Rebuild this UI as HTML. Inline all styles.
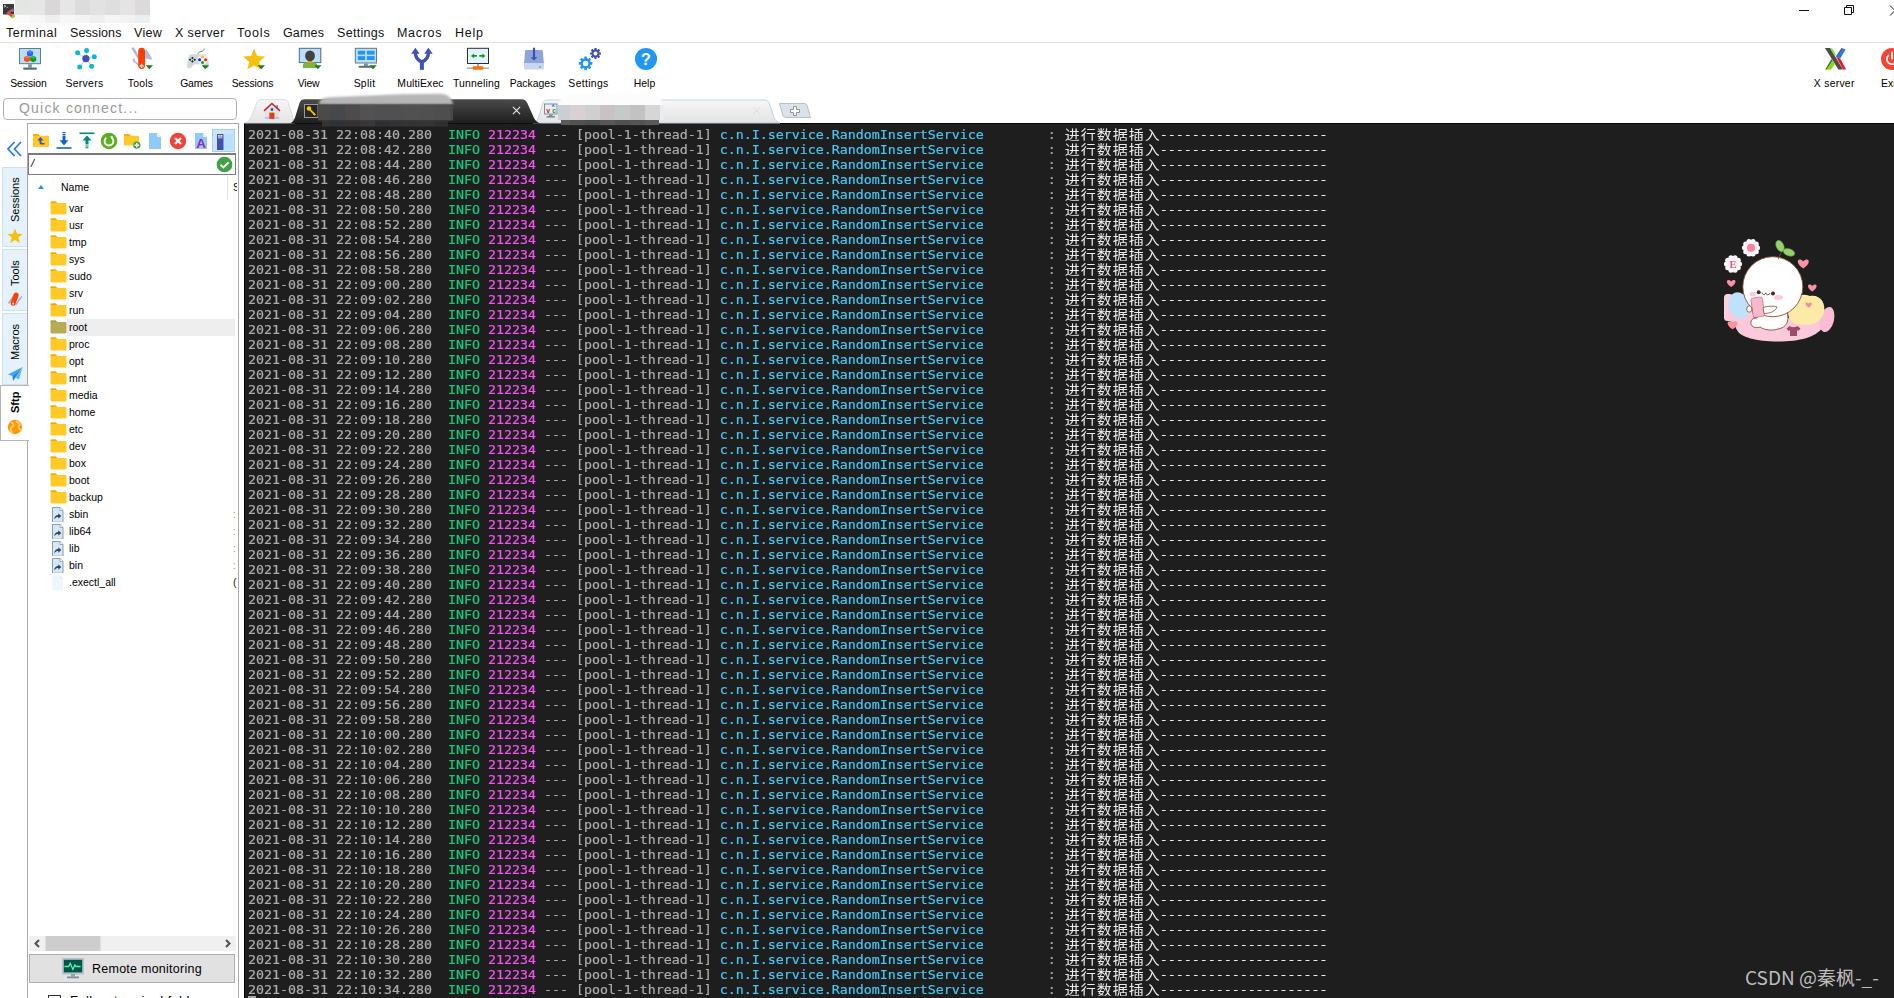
<!DOCTYPE html>
<html lang="en"><head><meta charset="utf-8"><title>MobaXterm</title>
<style>
*{box-sizing:border-box;margin:0;padding:0}
html,body{width:1894px;height:998px;overflow:hidden;background:#fff}
body{position:relative;font-family:"Liberation Sans","Noto Sans CJK SC",sans-serif;color:#000}
.abs{position:absolute}
/* title bar */
#appicon{position:absolute;left:2px;top:3px;width:14px;height:16px}
#blurtitle{position:absolute;left:15px;top:0;width:136px;height:26px}
.wc{position:absolute;top:0;height:22px}
/* menu */
#menu span{position:absolute;top:25px;height:17px;line-height:17px;font-size:12.5px;white-space:nowrap;color:#111}
#menuline{position:absolute;left:0;top:42px;width:1894px;height:1px;background:#e3e3e3}
/* toolbar */
.tb{position:absolute;top:44px;width:56px;height:50px;text-align:center}
.tb svg{position:absolute;left:16px;top:3px;width:24px;height:24px}
.tb b{position:absolute;left:-11.5px;right:-8.5px;top:33px;font-weight:normal;font-size:10.4px;line-height:13px;white-space:nowrap;color:#000}
/* quick connect */
#qc{position:absolute;left:3px;top:98px;width:234px;height:22px;border:1px solid #b4b4b4;border-radius:4px;background:#fff;font-size:14px;letter-spacing:1.2px;color:#9a9a9a;line-height:19px;padding-left:15px;white-space:nowrap}
/* terminal */
#tabs{z-index:5}
#term{position:absolute;left:244px;top:123px;width:1650px;height:875px;background:#1e1e1e;box-shadow:inset 1px 1px 0 #000;overflow:hidden;font-family:"DejaVu Sans Mono","Liberation Mono","Noto Sans CJK SC",monospace;font-size:13.29px;color:#b4b4b4}
#term .ln{position:relative;height:15px;line-height:15px;white-space:pre;left:4px;top:4px;transform:scaleY(.92);transform-origin:0 11.5px;-webkit-text-stroke:.22px}
.g{color:#adadad}.i{color:#1dc679}.m{color:#f850f4}.c{color:#48c6f2}.w{color:#ededed}
.z{-webkit-text-stroke:0;position:relative;top:-1px;margin-left:1px;margin-right:-1px;color:#ededed;font-family:"Noto Sans CJK SC",sans-serif;font-size:15px;letter-spacing:1px;display:inline-block;width:96px;height:15px;line-height:15px;vertical-align:top;overflow:hidden}
#cursor{position:absolute;left:4px;top:873px;width:8px;height:2px;background:#aaa}
#wm{position:absolute;left:1501px;top:839.600px;font-family:"Noto Sans CJK SC","Liberation Sans",sans-serif;font-size:19px;line-height:28px;color:#bdbdbd;white-space:nowrap}
/* vertical side tabs */
#vside{position:absolute;left:0;top:0;width:28px;height:998px}
.vt{position:absolute;left:2px;width:25px;background:#e5f1fb;border:1px solid #cfe0f3;border-right:none}
.vt span{position:absolute;left:5px;width:14px;height:14px;line-height:14px;font-size:11px;white-space:nowrap;transform-origin:0 0;transform:rotate(-90deg);color:#000}
.vt svg{position:absolute;left:4px;width:16px;height:16px}
.vt.act{left:0;width:29px;background:#fff;border:1px solid #b5b5b5;border-right:none;z-index:3}
.vt.act span{left:7px}.vt.act svg{left:6px}
/* sftp panel */
#sftp{position:absolute;left:27px;top:123px;width:212px;height:880px;background:#fff;border:1px solid #a9a9a9}
#sftp>svg.abs,#sftp>div.abs{margin-left:0}
#pathbox{position:absolute;left:0px;top:29px;width:208px;height:22px;border:1px solid #7a7a7a;border-top-width:2px;background:#fff}
#pathbox span{position:absolute;left:2px;top:1px;font-size:11px;font-style:italic;line-height:14px}
#pathbox svg{position:absolute;right:2px;top:1px;width:17px;height:17px}
#fhead{position:absolute;left:0;top:52px;width:210px;height:23px;font-size:10.500px}
#fhead i{position:absolute;left:10px;top:9px;width:0;height:0;border-left:3.500px solid transparent;border-right:3.500px solid transparent;border-bottom:4px solid #2a8fe8}
#fhead span{position:absolute;left:33px;top:5px;line-height:13px}
#fhead em{position:absolute;left:199px;top:0;width:1px;height:23px;background:#e0e0e0}
#fhead u{position:absolute;left:205px;top:5px;line-height:13px;text-decoration:none;width:4px;overflow:hidden}
.fr{position:absolute;left:22px;width:187px;height:17px;font-size:10.500px;line-height:17px;white-space:nowrap}
.fr svg{position:absolute;left:0;top:1px;width:17px;height:14px}
.fr span{position:absolute;left:17px;top:0;height:17px;padding-left:2px;right:2px}
.fr.sel span{background:#eeeeee}
.fr q{position:absolute;left:183px;top:0;width:4px;overflow:hidden;color:#e08020;quotes:none}
.fr q:before,.fr q:after{content:none}
#hsb{position:absolute;left:1px;top:812px;width:207px;height:15px;background:#f0f0f0}
#hsb svg{position:absolute;left:0;top:0;width:207px;height:15px}
#rmon{position:absolute;left:1px;top:830px;width:206px;height:29px;background:#e1e1e1;border:1px solid #adadad}
#rmon svg{position:absolute;left:32px;top:3px;width:22px;height:21px}
#rmon span{position:absolute;left:62px;top:7px;font-size:12.500px;line-height:15px;white-space:nowrap;letter-spacing:.25px}
#follow{position:absolute;left:0;top:871px;width:210px;height:10px}
#follow i{position:absolute;left:20px;top:0;width:13px;height:13px;border:1px solid #333;background:#fff}
#follow span{position:absolute;left:42px;top:-2.5px;font-size:13px;line-height:15px;white-space:nowrap;letter-spacing:.4px}
#split{position:absolute;left:239px;top:123px;width:5px;height:875px;background:#f0f0f0}

</style></head>
<body>
<svg id="appicon" viewBox="0 0 14 16"><rect x="1" y="1" width="11" height="10.5" fill="#3a3a3a"/><path d="M2 2.2l2 1-2 1" stroke="#eee" stroke-width=".7" fill="none"/><path d="M4.6 4.4h1.4" stroke="#ddd" stroke-width=".6"/><path d="M10.800 5.200L4.200 9.800 10 15l1.800-2L8 9.800 11.800 7z" fill="#e84a4a"/><path d="M12 5.800L9.600 8l1.200 1 1.900-1.800z" fill="#4a90e8"/><path d="M12.300 10.600l.8 3-2.500 1.800-1.300-1.400z" fill="#9ad21a"/></svg>
<svg id="blurtitle" viewBox="0 0 136 26"><rect x="0" y="0" width="15" height="15" fill="#e4e6e3"/><rect x="0" y="15" width="15" height="8" fill="#fafafa"/><rect x="15" y="0" width="15" height="15" fill="#e6e6e6"/><rect x="15" y="15" width="15" height="8" fill="#f6f6f6"/><rect x="30" y="0" width="15" height="15" fill="#d9d7d8"/><rect x="30" y="15" width="15" height="8" fill="#efefef"/><rect x="45" y="0" width="15" height="15" fill="#e6e6e6"/><rect x="45" y="15" width="15" height="8" fill="#f7f7f7"/><rect x="60" y="0" width="15" height="15" fill="#dcdcdc"/><rect x="60" y="15" width="15" height="8" fill="#f4f4f4"/><rect x="75" y="0" width="15" height="15" fill="#e2e2e2"/><rect x="75" y="15" width="15" height="8" fill="#efefef"/><rect x="90" y="0" width="15" height="15" fill="#dedede"/><rect x="90" y="15" width="15" height="8" fill="#f5f5f5"/><rect x="105" y="0" width="15" height="15" fill="#e4e4e4"/><rect x="105" y="15" width="15" height="8" fill="#f2f2f2"/><rect x="120" y="0" width="15" height="15" fill="#dcdadb"/><rect x="120" y="15" width="15" height="8" fill="#eceef2"/><rect x="15" y="23" width="45" height="2" fill="#fafafa"/></svg>
<svg class="abs" style="left:1796px;top:0;width:98px;height:22px" viewBox="0 0 98 22"><path d="M3 10.5h10" stroke="#111" stroke-width="1"/><path d="M48.5 7.5h7v7h-7z M50.5 7.5v-2h7v7h-2" stroke="#111" stroke-width="1" fill="none"/><path d="M94 5.500l10 10m0-10l-10 10" stroke="#111" stroke-width="1"/></svg>
<div id="menu"><span style="left:6px;letter-spacing:0.5px">Terminal</span><span style="left:70px;letter-spacing:0.1px">Sessions</span><span style="left:134px;letter-spacing:0.3px">View</span><span style="left:175px;letter-spacing:0.4px">X server</span><span style="left:237px;letter-spacing:0.9px">Tools</span><span style="left:283px;letter-spacing:0.15px">Games</span><span style="left:337px;letter-spacing:0.3px">Settings</span><span style="left:397px;letter-spacing:0.7px">Macros</span><span style="left:455px;letter-spacing:0.75px">Help</span></div>
<div id="menuline"></div>
<div class="tb" style="left:2px"><svg viewBox="0 0 24 24"><rect x="1" y="1" width="22" height="16.2" fill="#607d8b"/><rect x="2" y="2" width="20" height="14.2" fill="#bbdefb"/><rect x="10.2" y="17.2" width="3.6" height="3.4" fill="#78909c"/><rect x="5.2" y="20.5" width="13.6" height="2.2" rx=".6" fill="#546e7a"/><path d="M12 3.2l3 1.5v3.6l-3 1.5-3-1.5V4.700z" fill="#2962ff"/><path d="M12 3.200l3 1.500-3 1.500-3-1.500z" fill="#448aff"/><path d="M9 8.700l3 1.500v3.600l-3 1.500-3-1.500v-3.600z" fill="#f4511e"/><path d="M9 8.700l3 1.500-3 1.500-3-1.500z" fill="#ff7043"/><path d="M15.200 8.700l3 1.500v3.600l-3 1.500-3-1.500v-3.600z" fill="#0a9a1a"/><path d="M15.200 8.700l3 1.500-3 1.500-3-1.500z" fill="#33c043"/></svg><b style="letter-spacing:-0.04px">Session</b></div>
<div class="tb" style="left:58px"><svg viewBox="0 0 24 24"><g stroke="#cfd8dc" stroke-width="1.3"><path d="M11.900 11.600L3.600 5.800M11.900 11.600L12.600 3.500M11.900 11.600L20.300 9.800M11.900 11.600L17.600 19.200M11.900 11.600L5.700 20.100"/></g><circle cx="11.900" cy="11.600" r="3.600" fill="#3f51b5"/><g fill="#00bcd4"><circle cx="3.600" cy="5.800" r="2.500"/><circle cx="12.600" cy="3.500" r="2.500"/><circle cx="20.300" cy="9.800" r="2.500"/><circle cx="17.600" cy="19.200" r="2.500"/><circle cx="5.700" cy="20.100" r="2.500"/></g></svg><b style="letter-spacing:0.3px">Servers</b></div>
<div class="tb" style="left:114px"><svg viewBox="0 0 24 24"><path d="M1.300 1l2.500-.4 5 8.400v4.400z" fill="#9fa8da" opacity=".85"/><path d="M14.800 3.200l1.900-.6 6 10.200-7.900-1.600z" fill="#9fa8da" opacity=".8"/><path d="M3 11c-1 2 0 4.500 2.200 5l3.200 3 1-1.200-3-2.800c-1.400-.3-2-1.700-1.700-3z" fill="#9fa8da" opacity=".85"/><rect x="8.200" y=".8" width="6.800" height="21.200" rx="3.400" fill="#ff3d00"/><circle cx="11.600" cy="4.600" r=".7" fill="#d23000"/><path d="M11.600 16.800v4M9.600 18.800h4" stroke="#fff" stroke-width="1.300"/><path d="M15.6 18.3h7.4l-3.7 4z" fill="#1b7f1b"/></svg><b style="letter-spacing:0.28px">Tools</b></div>
<div class="tb" style="left:170px"><svg viewBox="0 0 24 24"><path d="M12 7.200c.2-1.800 1.400-2.200 3-2.600 1.400-.4 3.200-1 3.400-3" stroke="#607d8b" stroke-width=".9" fill="none"/><path d="M5.500 7.200h13c2.300 0 3.300 2.800 3.800 6 .5 3.200 1 6.500-.2 7.800-1.400 1.400-3.300-.3-5-2.600-.8-1-1.600-1.200-2.500-1.200h-5.200c-.9 0-1.700.2-2.500 1.200-1.700 2.300-3.600 4-5 2.600-1.200-1.300-.7-4.600-.2-7.800.5-3.200 1.500-6 3.800-6z" fill="#cfd8dc"/><circle cx="16.500" cy="12.700" r="5" fill="#eef2f4"/><path d="M6.400 9.700l1.300 1.300-1.300 1.300-1.300-1.300zM6.400 13.100l1.300 1.300-1.300 1.300-1.300-1.300zM4.100 11.400l1.300 1.300-1.300 1.300-1.300-1.300zM8.700 11.400l1.300 1.300-1.300 1.300-1.300-1.300z" fill="#222"/><circle cx="16.500" cy="9.800" r="1.500" fill="#f4c20d"/><circle cx="13.600" cy="12.700" r="1.500" fill="#1a1aff"/><circle cx="19.500" cy="12.700" r="1.500" fill="#ff1010"/><circle cx="16.500" cy="15.600" r="1.500" fill="#10a010"/><path d="M15.6 18.3h7.4l-3.7 4z" fill="#1b7f1b"/></svg><b style="letter-spacing:-0.15px">Games</b></div>
<div class="tb" style="left:226px"><svg viewBox="0 0 24 24"><polygon points="12.10,1.60 15.16,8.99 23.13,9.62 17.05,14.81 18.92,22.58 12.10,18.40 5.28,22.58 7.15,14.81 1.07,9.62 9.04,8.99" fill="#f4c20d"/><path d="M15.6 18.3h7.4l-3.7 4z" fill="#1b7f1b"/></svg><b style="letter-spacing:-0.08px">Sessions</b></div>
<div class="tb" style="left:282px"><svg viewBox="0 0 24 24"><rect x=".8" y=".8" width="22.500" height="15.300" fill="#546e7a"/><rect x="1.800" y="1.800" width="20.500" height="13.300" fill="#bbdefb"/><path d="M4.900 21v-2.600c0-2 2-3 4.600-3.300h5c2.600.3 4.700 1.300 4.700 3.300V21z" fill="#7cb342"/><path d="M9.800 13.500h4.400v1.600c0 1.400-4.400 1.400-4.400 0z" fill="#ff9800"/><ellipse cx="12" cy="8.900" rx="4.900" ry="5.400" fill="#424242"/><path d="M16.100 18.300h7.400l-3.700 4z" fill="#1b7f1b"/></svg><b style="letter-spacing:-0.15px">View</b></div>
<div class="tb" style="left:338px"><svg viewBox="0 0 24 24"><rect x=".8" y=".8" width="22.200" height="15.700" fill="#607d8b"/><rect x="1.800" y="1.800" width="20.200" height="13.700" fill="#bbdefb"/><g fill="#2196f3"><rect x="3.800" y="3.800" width="7.300" height="3.800"/><rect x="12.900" y="3.800" width="7.700" height="3.800"/><rect x="3.800" y="9.100" width="7.300" height="3.900"/><rect x="12.900" y="9.100" width="7.700" height="3.900"/></g><rect x="10" y="16.500" width="3.800" height="2.400" fill="#78909c"/><rect x="4.800" y="18.800" width="14" height="1.900" rx=".5" fill="#546e7a"/><path d="M15.200 18.300h7.600l-3.800 4z" fill="#1b7f1b"/></svg><b style="letter-spacing:0.3px">Split</b></div>
<div class="tb" style="left:394px"><svg viewBox="0 0 24 24"><path d="M11.900 22.800v-8.500" stroke="#3f51b5" stroke-width="4" fill="none"/><path d="M5.400 5.500c0 5 2.500 8 6.500 9.300M18.400 5.500c0 5-2.500 8-6.500 9.300" stroke="#3f51b5" stroke-width="3.400" fill="none"/><path d="M5.400.8l4.200 6h-8.400zM18.400.8l4.300 6h-8.500z" fill="#3f51b5"/></svg><b style="letter-spacing:0.14px">MultiExec</b></div>
<div class="tb" style="left:450px"><svg viewBox="0 0 24 24"><rect x="1" y=".8" width="22" height="16.200" fill="#2f2f2f"/><rect x="2" y="1.800" width="20" height="14.200" fill="#e3f2fd"/><path d="M4.900 8.900l3-2.300v1.500h3v1.600h-3v1.500z" fill="#0a9a0a"/><path d="M19.400 8.900l-3-2.300v1.500h-3.100v1.600h3.100v1.500z" fill="#0a9a0a"/><rect x="11.100" y="17" width="1.800" height="3" fill="#90a4ae"/><rect x="1" y="20.500" width="22" height="1.300" fill="#90a4ae"/><rect x="6.800" y="19.200" width="10.400" height="3.600" rx=".9" fill="#ff6d00"/></svg><b style="letter-spacing:0.22px">Tunneling</b></div>
<div class="tb" style="left:506px"><svg viewBox="0 0 24 24"><path d="M4.200 3h15.500c.6 0 1 .3 1.100.9l1.100 12.600H2l1.100-12.600c.1-.6.500-.9 1.100-.9z" fill="#8fa5d8"/><path d="M2 16.500h19.900v4.700c0 .7-.5 1.200-1.200 1.200H3.200c-.7 0-1.200-.5-1.200-1.200z" fill="#c9d6f3"/><circle cx="18" cy="20" r=".9" fill="#5ed000"/><path d="M10.900.8h2.200v9.400h2.400L12 13.600 8.500 10.200h2.400z" fill="#3f51b5"/></svg><b style="letter-spacing:0.01px">Packages</b></div>
<div class="tb" style="left:562px"><svg viewBox="0 0 24 24"><g fill="#2196f3"><circle cx="7.6" cy="16.4" r="5.1"/><rect x="6.25" y="9.60" width="2.7" height="6.8" rx=".4" transform="rotate(0.0 7.6 16.4)"/><rect x="6.25" y="9.60" width="2.7" height="6.8" rx=".4" transform="rotate(45.0 7.6 16.4)"/><rect x="6.25" y="9.60" width="2.7" height="6.8" rx=".4" transform="rotate(90.0 7.6 16.4)"/><rect x="6.25" y="9.60" width="2.7" height="6.8" rx=".4" transform="rotate(135.0 7.6 16.4)"/><rect x="6.25" y="9.60" width="2.7" height="6.8" rx=".4" transform="rotate(180.0 7.6 16.4)"/><rect x="6.25" y="9.60" width="2.7" height="6.8" rx=".4" transform="rotate(225.0 7.6 16.4)"/><rect x="6.25" y="9.60" width="2.7" height="6.8" rx=".4" transform="rotate(270.0 7.6 16.4)"/><rect x="6.25" y="9.60" width="2.7" height="6.8" rx=".4" transform="rotate(315.0 7.6 16.4)"/></g><circle cx="7.6" cy="16.4" r="2.7" fill="#fff"/><g fill="#3f51b5"><circle cx="17.5" cy="6.5" r="4.0"/><rect x="16.40" y="1.00" width="2.2" height="5.5" rx=".4" transform="rotate(0.0 17.5 6.5)"/><rect x="16.40" y="1.00" width="2.2" height="5.5" rx=".4" transform="rotate(45.0 17.5 6.5)"/><rect x="16.40" y="1.00" width="2.2" height="5.5" rx=".4" transform="rotate(90.0 17.5 6.5)"/><rect x="16.40" y="1.00" width="2.2" height="5.5" rx=".4" transform="rotate(135.0 17.5 6.5)"/><rect x="16.40" y="1.00" width="2.2" height="5.5" rx=".4" transform="rotate(180.0 17.5 6.5)"/><rect x="16.40" y="1.00" width="2.2" height="5.5" rx=".4" transform="rotate(225.0 17.5 6.5)"/><rect x="16.40" y="1.00" width="2.2" height="5.5" rx=".4" transform="rotate(270.0 17.5 6.5)"/><rect x="16.40" y="1.00" width="2.2" height="5.5" rx=".4" transform="rotate(315.0 17.5 6.5)"/></g><circle cx="17.5" cy="6.5" r="2.0" fill="#fff"/></svg><b style="letter-spacing:0.34px">Settings</b></div>
<div class="tb" style="left:618px"><svg viewBox="0 0 24 24"><circle cx="12" cy="11.900" r="11" fill="#2196f3"/><text x="12" y="17.600" text-anchor="middle" font-family="Liberation Sans,sans-serif" font-weight="bold" font-size="16" fill="#fff">?</text></svg><b style="letter-spacing:0.04px">Help</b></div>
<div class="tb" style="left:1808px"><svg viewBox="0 0 24 24"><path d="M.9 1h5.100l13 21.500h-4.600z" fill="#4d4d4d"/><path d="M5.900 1l2.300.6 3.900 6.600-1.600.3z" fill="#7fdc1a"/><path d="M8 12.600l2.900 4.500-4 5.600H1.600l.5-.9z" fill="#7fdc1a"/><path d="M7.600 12l.9 1.300-6.200 9.200-1-.1z" fill="#4d4d4d"/><path d="M18.200 1.200l3.500 1.300-5.500 8.900-3.900-1.200z" fill="#2979ff"/><path d="M17.500 1l1 .3-5.700 9-.8-1z" fill="#4d4d4d"/><path d="M12.300 10.300l3.900 1.100 5.900 11.100h-2.900z" fill="#f01818"/></svg><b style="left:-12px;right:-8.500px;letter-spacing:.26px">X server</b></div>
<div class="tb" style="left:1864px"><svg viewBox="0 0 24 24"><circle cx="12" cy="12" r="11" fill="#f44336"/><path d="M12 5.500v6" stroke="#fff" stroke-width="1.800" stroke-linecap="round"/><path d="M8.400 8.300a5.200 5.200 0 1 0 7.200 0" stroke="#fff" stroke-width="1.700" fill="none" stroke-linecap="round"/></svg><b style="left:17px;right:auto">Exit</b></div>
<div id="qc">Quick connect...</div>
<svg id="tabs" class="abs" style="left:240px;top:90px;width:600px;height:40px" viewBox="240 90 600 40">
<defs><linearGradient id="tg" x1="0" y1="0" x2="0" y2="1"><stop offset="0" stop-color="#f7f5f5"/><stop offset="1" stop-color="#e6e4e4"/></linearGradient><linearGradient id="dg" x1="0" y1="0" x2="0" y2="1"><stop offset="0" stop-color="#4b4b4b"/><stop offset=".5" stop-color="#333333"/><stop offset="1" stop-color="#1e1e1e"/></linearGradient><linearGradient id="lg" x1="0" y1="0" x2="0" y2="1"><stop offset="0" stop-color="#f7f7f7"/><stop offset="1" stop-color="#e3e3e3"/></linearGradient><filter id="bl" x="-10%" y="-30%" width="120%" height="160%"><feGaussianBlur stdDeviation="1.2"/></filter></defs>
<path d="M244.500 123 C249 121.500 250.500 119 252 115 L256.500 103.500 C257.500 100.500 259 99.700 262 99.700 L283.500 99.700 C286.500 99.700 287.500 100.500 288.500 103.500 L294.500 123 Z" fill="url(#tg)" stroke="#d0dcec" stroke-width="1"/>
<g><path d="M264.800 111L271.900 104.300 279 111V118.800H264.800z" fill="#e2e2e2"/><rect x="264.900" y="117.100" width="14.100" height="1.700" fill="#b7bdf0"/><rect x="276.200" y="105" width="1.800" height="3.600" fill="#7f8be0"/><path d="M264 110.900L271.900 103.500 280 110.900" stroke="#c62828" stroke-width="1.500" fill="none"/><rect x="269.300" y="112.600" width="5.100" height="6.200" fill="#e04010"/><rect x="270.800" y="108.200" width="2.300" height="2.500" rx=".5" fill="#0d56a8"/></g>
<path d="M533 123 C537 121.500 538 119 539 116 L542.500 104 C543.500 100.800 545 100 548 100 L764 100 C767 100 768.500 100.800 769.500 104 L773.500 116 C774.500 119 776 121.500 780 123 Z" fill="url(#lg)" stroke="#c3d3e6" stroke-width="1"/>
<g><rect x="544.500" y="104" width="12.500" height="10" fill="#e8eef4" stroke="#78909c" stroke-width="1"/><rect x="549" y="114.500" width="3.500" height="2" fill="#78909c"/><rect x="546.500" y="116.200" width="8.500" height="1.300" fill="#607d8b"/><text x="546.200" y="112.500" font-family="Liberation Sans,sans-serif" font-size="7" font-weight="bold" fill="#e01010">v</text><text x="552.200" y="113" font-family="Liberation Sans,sans-serif" font-size="6.500" font-weight="bold" fill="#10a010">c</text><text x="551.800" y="107.500" font-family="Liberation Sans,sans-serif" font-size="5" font-weight="bold" fill="#1010e0">^</text></g>
<path d="M753.300 107.400l6.400 6.400m0-6.400l-6.400 6.400" stroke="#d8d8d8" stroke-width="1"/>
<g filter="url(#bl)"><rect x="559" y="93.500" width="104" height="30" rx="12" fill="#fcfcfc"/></g>
<rect x="558" y="105" width="12" height="15" fill="#c9cfd2"/><rect x="570" y="105" width="15" height="15" fill="#d8d0d3"/><rect x="585" y="105" width="15" height="15" fill="#cfcfcf"/><rect x="600" y="105" width="15" height="15" fill="#c8c2c6"/><rect x="615" y="105" width="15" height="15" fill="#c5c9c7"/><rect x="630" y="105" width="15" height="15" fill="#c2c2c2"/><rect x="645" y="105" width="15" height="15" fill="#d6d6d6"/><rect x="660" y="105" width="4" height="15" fill="#ececec"/><rect x="561" y="120" width="9" height="5" fill="#5a5a5a"/><rect x="570" y="120" width="15" height="5" fill="#525252"/><rect x="585" y="120" width="15" height="5" fill="#4e4e4e"/><rect x="600" y="120" width="15" height="5" fill="#585858"/><rect x="615" y="120" width="15" height="5" fill="#505050"/><rect x="630" y="120" width="15" height="5" fill="#545454"/><rect x="645" y="120" width="14" height="5" fill="#5a5a5a"/>
<path d="M290 123.500 C293 122 294.500 119.500 295.500 116 L299.500 103 C300.500 100 302 99.200 305 99.200 L521 99.200 C524 99.200 526 100 527.500 103.500 L534 118 C535.500 121 537.500 122.500 541 123.500 Z" fill="url(#dg)"/>
<rect x="304.500" y="104.500" width="13.500" height="13" fill="#262626" stroke="#9a9a9a" stroke-width="1"/><circle cx="309" cy="108.500" r="2.300" fill="#f5c518"/><path d="M310.300 110l5 5.200" stroke="#f5c518" stroke-width="1.800"/><path d="M313.500 114.500l1.300-1.300" stroke="#f5c518" stroke-width="1"/>
<path d="M512.900 106.900l7.200 7.200m0-7.200l-7.200 7.200" stroke="#ececec" stroke-width="1.100"/>
<g filter="url(#bl)"><path d="M319 104.500 C319 100 322 97.800 330 97.300 L400 94.200 L440 93.800 C448 94 452 98 453 104.500 Z" fill="#b6b6b6"/></g>
<rect x="318" y="104.500" width="12" height="16" fill="#4c4a48"/><rect x="330" y="104.500" width="15" height="16" fill="#46484c"/><rect x="345" y="104.500" width="15" height="16" fill="#4f4b4d"/><rect x="360" y="104.500" width="15" height="16" fill="#525252"/><rect x="375" y="104.500" width="15" height="16" fill="#505050"/><rect x="390" y="104.500" width="15" height="16" fill="#505050"/><rect x="405" y="104.500" width="15" height="16" fill="#515151"/><rect x="420" y="104.500" width="15" height="16" fill="#505050"/><rect x="435" y="104.500" width="15" height="16" fill="#4e4e4e"/><rect x="450" y="104.500" width="3" height="16" fill="#484848"/><rect x="322" y="120.500" width="8" height="6" fill="#3a3a3a" opacity=".85"/><rect x="330" y="120.500" width="15" height="6" fill="#34363a" opacity=".85"/><rect x="345" y="120.500" width="15" height="6" fill="#3a3838" opacity=".85"/><rect x="360" y="120.500" width="15" height="6" fill="#3d3d3d" opacity=".85"/><rect x="375" y="120.500" width="15" height="6" fill="#30343a" opacity=".85"/><rect x="390" y="120.500" width="15" height="6" fill="#38363a" opacity=".85"/><rect x="405" y="120.500" width="15" height="6" fill="#383838" opacity=".85"/><rect x="420" y="120.500" width="15" height="6" fill="#3a3a3a" opacity=".85"/><rect x="435" y="120.500" width="13" height="6" fill="#343434" opacity=".85"/>
<path d="M779.500 103.500 L804 103.500 C806 103.500 806.800 104.500 807.300 106 L810.500 117.500 L786 117.500 C784 117.500 783.200 116.500 782.700 115 Z" fill="#dbe2ea" stroke="#b4c0cc" stroke-width="1"/><path d="M793.500 106.500h3v3h3v3h-3v3h-3v-3h-3v-3h3z" fill="#fff" stroke="#8a8a8a" stroke-width=".9"/>
</svg>
<div id="vside">
<svg class="abs" style="left:6px;top:140px;width:18px;height:18px" viewBox="0 0 18 18"><path d="M8.500 2L2 9l6.500 7M15 2L8.500 9l6.500 7" stroke="#2a7de1" stroke-width="1.800" fill="none"/></svg>
<div class="vt" style="top:167px;height:80px"><span style="top:54px">Sessions</span><svg style="top:60px" viewBox="0 0 16 16"><path d="M8 .5l2.100 5.300 5.600.3-4.400 3.500 1.500 5.500L8 12l-4.800 3.100 1.500-5.500L.300 6.100l5.600-.3z" fill="#f4c20d"/></svg></div>
<div class="vt" style="top:249px;height:62px"><span style="top:36px">Tools</span><svg style="top:41px" viewBox="0 0 16 16"><path d="M1 12l6-9 1 .7-5.500 9zM8 13.500l6.500-8.500.8.700-6 8.600z" fill="#9fa8da"/><rect x="5.200" y="1.500" width="5" height="13.500" rx="2.500" transform="rotate(20 8 8)" fill="#ff3d00"/><circle cx="6.200" cy="12.500" r="1" fill="#fff"/></svg></div>
<div class="vt" style="top:313px;height:72px"><span style="top:46px">Macros</span><svg style="top:52px" viewBox="0 0 16 16"><path d="M15.500 1L1 8.500l4.500 1.500z" fill="#42a5f5"/><path d="M15.500 1L5.500 10l.5 5 2.500-3.500z" fill="#1e88e5"/><path d="M15.500 1L8.500 11.500l3.500 2z" fill="#64b5f6"/></svg></div>
<div class="vt act" style="top:385px;height:56px"><span style="top:27px;font-weight:bold">Sftp</span><svg style="top:33px" viewBox="0 0 16 16"><circle cx="8" cy="8" r="7.200" fill="#ff9800"/><path d="M4 3.500c2 .5 3 1.500 2.500 3S4 8 3.500 10 5 13 6 13.500M9 2c1 1.500 3 1.500 3.500 3s-1.500 2-1 3.500 2 1.500 2.500 3" stroke="#ffd180" stroke-width="1.600" fill="none"/></svg></div>
</div>
<div id="sftp">
<svg class="abs" style="left:4px;top:8px;width:18px;height:18px" viewBox="0 0 18 18"><path d="M1 3.200c0-.6.400-1 1-1h4.200l1.600 1.600H16c.6 0 1 .4 1 1V14c0 .6-.4 1-1 1H2c-.6 0-1-.4-1-1z" fill="#ffc928"/><path d="M1 3.200c0-.6.400-1 1-1h4.200l1.600 1.600H1z" fill="#ffa000"/><path d="M12.500 12.500H9.800c-1.400 0-2.300-.9-2.300-2.300V8.500H5.300L8.400 5l3.100 3.500H9.300v1.600c0 .5.300.8.800.8h2.400z" fill="#3f51b5"/></svg>
<svg class="abs" style="left:27px;top:8px;width:18px;height:18px" viewBox="0 0 18 18"><path d="M7.500 0h3v1.100h-3zM7.500 1.800h3v1.100h-3zM7.500 3.600h3v4.600h3L9 13.200 4.500 8.200h3z" fill="#1565c0"/><rect x="1.500" y="15.200" width="15" height="1.600" fill="#1565c0"/></svg>
<svg class="abs" style="left:50px;top:8px;width:18px;height:18px" viewBox="0 0 18 18"><rect x="1.500" y=".5" width="15" height="1.600" fill="#00897b"/><path d="M9 3.400l4.500 5h-3v4.200h-3V8.400h-3zM7.500 13.400h3v1.100h-3zM7.500 15.200h3v1.100h-3z" fill="#00897b"/></svg>
<svg class="abs" style="left:72px;top:8px;width:18px;height:18px" viewBox="0 0 18 18"><circle cx="9" cy="9" r="8.300" fill="#5aaf23"/><path d="M6.300 5.700a4.400 4.400 0 1 0 5.400 0" stroke="#fff" stroke-width="1.900" fill="none"/><path d="M10.200 4l3 .6-1.400 2.900z" fill="#fff"/></svg>
<svg class="abs" style="left:95px;top:8px;width:18px;height:18px" viewBox="0 0 18 18"><path d="M1 3.200c0-.6.400-1 1-1h4.200l1.600 1.600H15c.6 0 1 .4 1 1V12.500c0 .6-.4 1-1 1H2c-.6 0-1-.4-1-1z" fill="#ffc928"/><path d="M1 3.200c0-.6.400-1 1-1h4.200l1.600 1.600H1z" fill="#ffa000"/><circle cx="13.800" cy="13.200" r="3.600" fill="#43a047"/><path d="M13.800 11v4.400M11.600 13.200H16" stroke="#fff" stroke-width="1.500"/></svg>
<svg class="abs" style="left:118px;top:8px;width:18px;height:18px" viewBox="0 0 18 18"><path d="M3 1h8l4 4v12H3z" fill="#90caf9"/><path d="M11 1l4 4h-4z" fill="#e3f2fd"/></svg>
<svg class="abs" style="left:141px;top:8px;width:18px;height:18px" viewBox="0 0 18 18"><circle cx="9" cy="9" r="8.200" fill="#f44336"/><path d="M6 6l6 6M12 6l-6 6" stroke="#fff" stroke-width="2.200"/></svg>
<svg class="abs" style="left:164px;top:8px;width:18px;height:18px" viewBox="0 0 18 18"><path d="M3 1h8l4 4v12H3z" fill="#90caf9"/><path d="M11 1l4 4h-4z" fill="#e3f2fd"/><text x="9" y="15.800" text-anchor="middle" font-family="Liberation Sans,sans-serif" font-weight="bold" font-size="13.500" fill="#9c27b0">A</text></svg>
<div class="abs" style="left:184px;top:5px;width:23px;height:23px;background:#cce4f7;border:1px solid #99d1ff"></div>
<svg class="abs" style="left:188px;top:9px;width:18px;height:18px" viewBox="0 0 18 18"><rect x="1" y="1" width="6.500" height="16" fill="#3f51b5"/><rect x="2" y="2" width="4.500" height="3.500" fill="#9fa8da"/><rect x="2" y="2" width="1.500" height="1.200" fill="#ffeb3b"/><rect x="4.800" y="2" width="1.500" height="1.200" fill="#ffeb3b"/><rect x="8" y="1.500" width="9" height="15" fill="#bbdefb"/></svg>
<div id="pathbox"><span>/</span><svg viewBox="0 0 18 18"><circle cx="9" cy="9" r="8.300" fill="#43a047"/><path d="M4.800 9.300l3 2.900 5.600-5.600" stroke="#fff" stroke-width="2" fill="none"/></svg></div>
<div id="fhead"><i></i><span>Name</span><em></em><u>S</u></div>
<div class="fr" style="top:76px"><svg viewBox="0 0 17 14"><path d="M.5 1.800c0-.7.500-1.200 1.200-1.200h4l1.500 1.500h8.100c.7 0 1.200.5 1.200 1.200v9c0 .7-.5 1.200-1.200 1.200H1.700c-.7 0-1.200-.5-1.200-1.200z" fill="#ffc928"/><path d="M.5 1.800c0-.7.500-1.200 1.200-1.200h4l1.500 1.500H.5z" fill="#ffa000"/></svg><span>var</span></div>
<div class="fr" style="top:93px"><svg viewBox="0 0 17 14"><path d="M.5 1.800c0-.7.500-1.200 1.200-1.200h4l1.500 1.500h8.100c.7 0 1.200.5 1.200 1.200v9c0 .7-.5 1.200-1.200 1.200H1.700c-.7 0-1.200-.5-1.200-1.200z" fill="#ffc928"/><path d="M.5 1.800c0-.7.500-1.200 1.200-1.200h4l1.500 1.500H.5z" fill="#ffa000"/></svg><span>usr</span></div>
<div class="fr" style="top:110px"><svg viewBox="0 0 17 14"><path d="M.5 1.800c0-.7.500-1.200 1.200-1.200h4l1.500 1.500h8.100c.7 0 1.200.5 1.200 1.200v9c0 .7-.5 1.200-1.200 1.200H1.700c-.7 0-1.200-.5-1.200-1.200z" fill="#ffc928"/><path d="M.5 1.800c0-.7.500-1.200 1.200-1.200h4l1.500 1.500H.5z" fill="#ffa000"/></svg><span>tmp</span></div>
<div class="fr" style="top:127px"><svg viewBox="0 0 17 14"><path d="M.5 1.800c0-.7.500-1.200 1.200-1.200h4l1.500 1.500h8.100c.7 0 1.200.5 1.200 1.200v9c0 .7-.5 1.200-1.200 1.200H1.700c-.7 0-1.200-.5-1.200-1.200z" fill="#ffc928"/><path d="M.5 1.800c0-.7.500-1.200 1.200-1.200h4l1.500 1.500H.5z" fill="#ffa000"/></svg><span>sys</span></div>
<div class="fr" style="top:144px"><svg viewBox="0 0 17 14"><path d="M.5 1.800c0-.7.500-1.200 1.200-1.200h4l1.500 1.500h8.100c.7 0 1.200.5 1.200 1.200v9c0 .7-.5 1.200-1.200 1.200H1.700c-.7 0-1.200-.5-1.200-1.200z" fill="#ffc928"/><path d="M.5 1.800c0-.7.500-1.200 1.200-1.200h4l1.500 1.500H.5z" fill="#ffa000"/></svg><span>sudo</span></div>
<div class="fr" style="top:161px"><svg viewBox="0 0 17 14"><path d="M.5 1.800c0-.7.500-1.200 1.200-1.200h4l1.500 1.500h8.100c.7 0 1.200.5 1.200 1.200v9c0 .7-.5 1.200-1.200 1.200H1.700c-.7 0-1.200-.5-1.200-1.200z" fill="#ffc928"/><path d="M.5 1.800c0-.7.500-1.200 1.200-1.200h4l1.500 1.500H.5z" fill="#ffa000"/></svg><span>srv</span></div>
<div class="fr" style="top:178px"><svg viewBox="0 0 17 14"><path d="M.5 1.800c0-.7.500-1.200 1.200-1.200h4l1.500 1.500h8.100c.7 0 1.200.5 1.200 1.200v9c0 .7-.5 1.200-1.200 1.200H1.700c-.7 0-1.200-.5-1.200-1.200z" fill="#ffc928"/><path d="M.5 1.800c0-.7.500-1.200 1.200-1.200h4l1.500 1.500H.5z" fill="#ffa000"/></svg><span>run</span></div>
<div class="fr sel" style="top:195px"><svg viewBox="0 0 17 14"><path d="M.5 1.800c0-.7.500-1.200 1.200-1.200h4l1.500 1.500h8.100c.7 0 1.200.5 1.200 1.200v9c0 .7-.5 1.200-1.200 1.200H1.700c-.7 0-1.200-.5-1.200-1.200z" fill="#b8ab55"/><path d="M.5 1.800c0-.7.500-1.200 1.200-1.200h4l1.500 1.500H.5z" fill="#a89a48"/></svg><span>root</span></div>
<div class="fr" style="top:212px"><svg viewBox="0 0 17 14"><path d="M.5 1.800c0-.7.500-1.200 1.200-1.200h4l1.500 1.500h8.100c.7 0 1.200.5 1.200 1.200v9c0 .7-.5 1.200-1.200 1.200H1.700c-.7 0-1.200-.5-1.200-1.200z" fill="#ffc928"/><path d="M.5 1.800c0-.7.500-1.200 1.200-1.200h4l1.500 1.500H.5z" fill="#ffa000"/></svg><span>proc</span></div>
<div class="fr" style="top:229px"><svg viewBox="0 0 17 14"><path d="M.5 1.800c0-.7.500-1.200 1.200-1.200h4l1.500 1.500h8.100c.7 0 1.200.5 1.200 1.200v9c0 .7-.5 1.200-1.200 1.200H1.700c-.7 0-1.200-.5-1.200-1.200z" fill="#ffc928"/><path d="M.5 1.800c0-.7.500-1.200 1.200-1.200h4l1.500 1.500H.5z" fill="#ffa000"/></svg><span>opt</span></div>
<div class="fr" style="top:246px"><svg viewBox="0 0 17 14"><path d="M.5 1.800c0-.7.500-1.200 1.200-1.200h4l1.500 1.500h8.100c.7 0 1.200.5 1.200 1.200v9c0 .7-.5 1.200-1.200 1.200H1.700c-.7 0-1.200-.5-1.200-1.200z" fill="#ffc928"/><path d="M.5 1.800c0-.7.500-1.200 1.200-1.200h4l1.500 1.500H.5z" fill="#ffa000"/></svg><span>mnt</span></div>
<div class="fr" style="top:263px"><svg viewBox="0 0 17 14"><path d="M.5 1.800c0-.7.500-1.200 1.200-1.200h4l1.500 1.500h8.100c.7 0 1.200.5 1.200 1.200v9c0 .7-.5 1.200-1.200 1.200H1.700c-.7 0-1.200-.5-1.200-1.200z" fill="#ffc928"/><path d="M.5 1.800c0-.7.500-1.200 1.200-1.200h4l1.500 1.500H.5z" fill="#ffa000"/></svg><span>media</span></div>
<div class="fr" style="top:280px"><svg viewBox="0 0 17 14"><path d="M.5 1.800c0-.7.500-1.200 1.200-1.200h4l1.500 1.500h8.100c.7 0 1.200.5 1.200 1.200v9c0 .7-.5 1.200-1.200 1.200H1.700c-.7 0-1.200-.5-1.200-1.200z" fill="#ffc928"/><path d="M.5 1.800c0-.7.500-1.200 1.200-1.200h4l1.500 1.500H.5z" fill="#ffa000"/></svg><span>home</span></div>
<div class="fr" style="top:297px"><svg viewBox="0 0 17 14"><path d="M.5 1.800c0-.7.500-1.200 1.200-1.200h4l1.500 1.500h8.100c.7 0 1.200.5 1.200 1.200v9c0 .7-.5 1.200-1.200 1.200H1.700c-.7 0-1.200-.5-1.200-1.200z" fill="#ffc928"/><path d="M.5 1.800c0-.7.500-1.200 1.200-1.200h4l1.500 1.500H.5z" fill="#ffa000"/></svg><span>etc</span></div>
<div class="fr" style="top:314px"><svg viewBox="0 0 17 14"><path d="M.5 1.800c0-.7.500-1.200 1.200-1.200h4l1.500 1.500h8.100c.7 0 1.200.5 1.200 1.200v9c0 .7-.5 1.200-1.200 1.200H1.700c-.7 0-1.200-.5-1.200-1.200z" fill="#ffc928"/><path d="M.5 1.800c0-.7.500-1.200 1.200-1.200h4l1.500 1.500H.5z" fill="#ffa000"/></svg><span>dev</span></div>
<div class="fr" style="top:331px"><svg viewBox="0 0 17 14"><path d="M.5 1.800c0-.7.500-1.200 1.200-1.200h4l1.500 1.500h8.100c.7 0 1.200.5 1.200 1.200v9c0 .7-.5 1.200-1.200 1.200H1.700c-.7 0-1.200-.5-1.200-1.200z" fill="#ffc928"/><path d="M.5 1.800c0-.7.500-1.200 1.200-1.200h4l1.500 1.500H.5z" fill="#ffa000"/></svg><span>box</span></div>
<div class="fr" style="top:348px"><svg viewBox="0 0 17 14"><path d="M.5 1.800c0-.7.500-1.200 1.200-1.200h4l1.500 1.500h8.100c.7 0 1.200.5 1.200 1.200v9c0 .7-.5 1.200-1.200 1.200H1.700c-.7 0-1.200-.5-1.200-1.200z" fill="#ffc928"/><path d="M.5 1.800c0-.7.500-1.200 1.200-1.200h4l1.500 1.500H.5z" fill="#ffa000"/></svg><span>boot</span></div>
<div class="fr" style="top:365px"><svg viewBox="0 0 17 14"><path d="M.5 1.800c0-.7.500-1.200 1.200-1.200h4l1.500 1.500h8.100c.7 0 1.200.5 1.200 1.200v9c0 .7-.5 1.200-1.200 1.200H1.700c-.7 0-1.200-.5-1.200-1.200z" fill="#ffc928"/><path d="M.5 1.800c0-.7.500-1.200 1.200-1.200h4l1.500 1.500H.5z" fill="#ffa000"/></svg><span>backup</span></div>
<div class="fr" style="top:382px"><svg viewBox="0 0 17 14" style="top:0;height:16px;width:17px" ><path d="M2.500 -.5h7.500l3 3v13H2.500z" fill="#d2e9fb" stroke="#78909c" stroke-width=".9" transform="translate(0,1) scale(1,.92)"/><path d="M10 .5v3h3" fill="#fff" stroke="#78909c" stroke-width=".7"/><path d="M4.300 12.500c0-3 1.500-4.600 4-4.600V6.200l3 2.800-3 2.800V10c-1.600 0-2.700.6-4 2.500z" fill="#37474f"/></svg><span>sbin</span><q>:</q></div>
<div class="fr" style="top:399px"><svg viewBox="0 0 17 14" style="top:0;height:16px;width:17px" ><path d="M2.500 -.5h7.500l3 3v13H2.500z" fill="#d2e9fb" stroke="#78909c" stroke-width=".9" transform="translate(0,1) scale(1,.92)"/><path d="M10 .5v3h3" fill="#fff" stroke="#78909c" stroke-width=".7"/><path d="M4.300 12.500c0-3 1.500-4.600 4-4.600V6.200l3 2.800-3 2.800V10c-1.600 0-2.700.6-4 2.500z" fill="#37474f"/></svg><span>lib64</span><q>:</q></div>
<div class="fr" style="top:416px"><svg viewBox="0 0 17 14" style="top:0;height:16px;width:17px" ><path d="M2.500 -.5h7.500l3 3v13H2.500z" fill="#d2e9fb" stroke="#78909c" stroke-width=".9" transform="translate(0,1) scale(1,.92)"/><path d="M10 .5v3h3" fill="#fff" stroke="#78909c" stroke-width=".7"/><path d="M4.300 12.500c0-3 1.500-4.600 4-4.600V6.200l3 2.800-3 2.800V10c-1.600 0-2.700.6-4 2.500z" fill="#37474f"/></svg><span>lib</span><q>:</q></div>
<div class="fr" style="top:433px"><svg viewBox="0 0 17 14" style="top:0;height:16px;width:17px" ><path d="M2.500 -.5h7.500l3 3v13H2.500z" fill="#d2e9fb" stroke="#78909c" stroke-width=".9" transform="translate(0,1) scale(1,.92)"/><path d="M10 .5v3h3" fill="#fff" stroke="#78909c" stroke-width=".7"/><path d="M4.300 12.500c0-3 1.500-4.600 4-4.600V6.200l3 2.800-3 2.800V10c-1.600 0-2.700.6-4 2.500z" fill="#37474f"/></svg><span>bin</span><q>:</q></div>
<div class="fr" style="top:450px"><svg viewBox="0 0 17 14" style="top:0;height:16px;width:17px"><path d="M2.500 .500h7.500l3 3v12H2.500z" fill="#eef5fb"/><path d="M10 .5l3 3h-3z" fill="#dde8f2"/></svg><span>.exectl_all</span><q style="color:#222">(</q></div>
<div id="hsb"><svg viewBox="0 0 207 15"><rect x="16.500" y="0" width="55" height="15" fill="#cdcdcd"/><path d="M10 4l-3.500 3.500L10 11" stroke="#505050" stroke-width="2" fill="none"/><path d="M197 4l3.500 3.500L197 11" stroke="#505050" stroke-width="2" fill="none"/></svg></div>
<div id="rmon"><svg viewBox="0 0 22 21"><rect x="0" y="0" width="22" height="16.500" fill="#b6c4cb"/><rect x="1.800" y="1.800" width="18.400" height="12.600" fill="#00564a"/><path d="M2.500 8.500h4l1.800-3 2.600 6 2-4.500 1.200 1.500h4.500" stroke="#69f0ae" stroke-width="1.300" fill="none"/><rect x="9" y="16" width="4" height="2.500" fill="#90a4ae"/><rect x="5" y="18.500" width="12" height="1.800" fill="#78909c"/></svg><span>Remote monitoring</span></div>
<div id="follow"><i></i><span>Follow terminal folder</span></div>
</div>
<div id="term">
<div class="ln"><span class="g">2021-08-31 22:08:40.280</span>  <span class="i">INFO</span> <span class="m">212234</span> <span class="g">---</span> <span class="g">[pool-1-thread-1]</span> <span class="c">c.n.I.service.RandomInsertService</span>        <span class="g">:</span> <span class="z">进行数据插入</span><span class="w">---------------------</span></div>
<div class="ln"><span class="g">2021-08-31 22:08:42.280</span>  <span class="i">INFO</span> <span class="m">212234</span> <span class="g">---</span> <span class="g">[pool-1-thread-1]</span> <span class="c">c.n.I.service.RandomInsertService</span>        <span class="g">:</span> <span class="z">进行数据插入</span><span class="w">---------------------</span></div>
<div class="ln"><span class="g">2021-08-31 22:08:44.280</span>  <span class="i">INFO</span> <span class="m">212234</span> <span class="g">---</span> <span class="g">[pool-1-thread-1]</span> <span class="c">c.n.I.service.RandomInsertService</span>        <span class="g">:</span> <span class="z">进行数据插入</span><span class="w">---------------------</span></div>
<div class="ln"><span class="g">2021-08-31 22:08:46.280</span>  <span class="i">INFO</span> <span class="m">212234</span> <span class="g">---</span> <span class="g">[pool-1-thread-1]</span> <span class="c">c.n.I.service.RandomInsertService</span>        <span class="g">:</span> <span class="z">进行数据插入</span><span class="w">---------------------</span></div>
<div class="ln"><span class="g">2021-08-31 22:08:48.280</span>  <span class="i">INFO</span> <span class="m">212234</span> <span class="g">---</span> <span class="g">[pool-1-thread-1]</span> <span class="c">c.n.I.service.RandomInsertService</span>        <span class="g">:</span> <span class="z">进行数据插入</span><span class="w">---------------------</span></div>
<div class="ln"><span class="g">2021-08-31 22:08:50.280</span>  <span class="i">INFO</span> <span class="m">212234</span> <span class="g">---</span> <span class="g">[pool-1-thread-1]</span> <span class="c">c.n.I.service.RandomInsertService</span>        <span class="g">:</span> <span class="z">进行数据插入</span><span class="w">---------------------</span></div>
<div class="ln"><span class="g">2021-08-31 22:08:52.280</span>  <span class="i">INFO</span> <span class="m">212234</span> <span class="g">---</span> <span class="g">[pool-1-thread-1]</span> <span class="c">c.n.I.service.RandomInsertService</span>        <span class="g">:</span> <span class="z">进行数据插入</span><span class="w">---------------------</span></div>
<div class="ln"><span class="g">2021-08-31 22:08:54.280</span>  <span class="i">INFO</span> <span class="m">212234</span> <span class="g">---</span> <span class="g">[pool-1-thread-1]</span> <span class="c">c.n.I.service.RandomInsertService</span>        <span class="g">:</span> <span class="z">进行数据插入</span><span class="w">---------------------</span></div>
<div class="ln"><span class="g">2021-08-31 22:08:56.280</span>  <span class="i">INFO</span> <span class="m">212234</span> <span class="g">---</span> <span class="g">[pool-1-thread-1]</span> <span class="c">c.n.I.service.RandomInsertService</span>        <span class="g">:</span> <span class="z">进行数据插入</span><span class="w">---------------------</span></div>
<div class="ln"><span class="g">2021-08-31 22:08:58.280</span>  <span class="i">INFO</span> <span class="m">212234</span> <span class="g">---</span> <span class="g">[pool-1-thread-1]</span> <span class="c">c.n.I.service.RandomInsertService</span>        <span class="g">:</span> <span class="z">进行数据插入</span><span class="w">---------------------</span></div>
<div class="ln"><span class="g">2021-08-31 22:09:00.280</span>  <span class="i">INFO</span> <span class="m">212234</span> <span class="g">---</span> <span class="g">[pool-1-thread-1]</span> <span class="c">c.n.I.service.RandomInsertService</span>        <span class="g">:</span> <span class="z">进行数据插入</span><span class="w">---------------------</span></div>
<div class="ln"><span class="g">2021-08-31 22:09:02.280</span>  <span class="i">INFO</span> <span class="m">212234</span> <span class="g">---</span> <span class="g">[pool-1-thread-1]</span> <span class="c">c.n.I.service.RandomInsertService</span>        <span class="g">:</span> <span class="z">进行数据插入</span><span class="w">---------------------</span></div>
<div class="ln"><span class="g">2021-08-31 22:09:04.280</span>  <span class="i">INFO</span> <span class="m">212234</span> <span class="g">---</span> <span class="g">[pool-1-thread-1]</span> <span class="c">c.n.I.service.RandomInsertService</span>        <span class="g">:</span> <span class="z">进行数据插入</span><span class="w">---------------------</span></div>
<div class="ln"><span class="g">2021-08-31 22:09:06.280</span>  <span class="i">INFO</span> <span class="m">212234</span> <span class="g">---</span> <span class="g">[pool-1-thread-1]</span> <span class="c">c.n.I.service.RandomInsertService</span>        <span class="g">:</span> <span class="z">进行数据插入</span><span class="w">---------------------</span></div>
<div class="ln"><span class="g">2021-08-31 22:09:08.280</span>  <span class="i">INFO</span> <span class="m">212234</span> <span class="g">---</span> <span class="g">[pool-1-thread-1]</span> <span class="c">c.n.I.service.RandomInsertService</span>        <span class="g">:</span> <span class="z">进行数据插入</span><span class="w">---------------------</span></div>
<div class="ln"><span class="g">2021-08-31 22:09:10.280</span>  <span class="i">INFO</span> <span class="m">212234</span> <span class="g">---</span> <span class="g">[pool-1-thread-1]</span> <span class="c">c.n.I.service.RandomInsertService</span>        <span class="g">:</span> <span class="z">进行数据插入</span><span class="w">---------------------</span></div>
<div class="ln"><span class="g">2021-08-31 22:09:12.280</span>  <span class="i">INFO</span> <span class="m">212234</span> <span class="g">---</span> <span class="g">[pool-1-thread-1]</span> <span class="c">c.n.I.service.RandomInsertService</span>        <span class="g">:</span> <span class="z">进行数据插入</span><span class="w">---------------------</span></div>
<div class="ln"><span class="g">2021-08-31 22:09:14.280</span>  <span class="i">INFO</span> <span class="m">212234</span> <span class="g">---</span> <span class="g">[pool-1-thread-1]</span> <span class="c">c.n.I.service.RandomInsertService</span>        <span class="g">:</span> <span class="z">进行数据插入</span><span class="w">---------------------</span></div>
<div class="ln"><span class="g">2021-08-31 22:09:16.280</span>  <span class="i">INFO</span> <span class="m">212234</span> <span class="g">---</span> <span class="g">[pool-1-thread-1]</span> <span class="c">c.n.I.service.RandomInsertService</span>        <span class="g">:</span> <span class="z">进行数据插入</span><span class="w">---------------------</span></div>
<div class="ln"><span class="g">2021-08-31 22:09:18.280</span>  <span class="i">INFO</span> <span class="m">212234</span> <span class="g">---</span> <span class="g">[pool-1-thread-1]</span> <span class="c">c.n.I.service.RandomInsertService</span>        <span class="g">:</span> <span class="z">进行数据插入</span><span class="w">---------------------</span></div>
<div class="ln"><span class="g">2021-08-31 22:09:20.280</span>  <span class="i">INFO</span> <span class="m">212234</span> <span class="g">---</span> <span class="g">[pool-1-thread-1]</span> <span class="c">c.n.I.service.RandomInsertService</span>        <span class="g">:</span> <span class="z">进行数据插入</span><span class="w">---------------------</span></div>
<div class="ln"><span class="g">2021-08-31 22:09:22.280</span>  <span class="i">INFO</span> <span class="m">212234</span> <span class="g">---</span> <span class="g">[pool-1-thread-1]</span> <span class="c">c.n.I.service.RandomInsertService</span>        <span class="g">:</span> <span class="z">进行数据插入</span><span class="w">---------------------</span></div>
<div class="ln"><span class="g">2021-08-31 22:09:24.280</span>  <span class="i">INFO</span> <span class="m">212234</span> <span class="g">---</span> <span class="g">[pool-1-thread-1]</span> <span class="c">c.n.I.service.RandomInsertService</span>        <span class="g">:</span> <span class="z">进行数据插入</span><span class="w">---------------------</span></div>
<div class="ln"><span class="g">2021-08-31 22:09:26.280</span>  <span class="i">INFO</span> <span class="m">212234</span> <span class="g">---</span> <span class="g">[pool-1-thread-1]</span> <span class="c">c.n.I.service.RandomInsertService</span>        <span class="g">:</span> <span class="z">进行数据插入</span><span class="w">---------------------</span></div>
<div class="ln"><span class="g">2021-08-31 22:09:28.280</span>  <span class="i">INFO</span> <span class="m">212234</span> <span class="g">---</span> <span class="g">[pool-1-thread-1]</span> <span class="c">c.n.I.service.RandomInsertService</span>        <span class="g">:</span> <span class="z">进行数据插入</span><span class="w">---------------------</span></div>
<div class="ln"><span class="g">2021-08-31 22:09:30.280</span>  <span class="i">INFO</span> <span class="m">212234</span> <span class="g">---</span> <span class="g">[pool-1-thread-1]</span> <span class="c">c.n.I.service.RandomInsertService</span>        <span class="g">:</span> <span class="z">进行数据插入</span><span class="w">---------------------</span></div>
<div class="ln"><span class="g">2021-08-31 22:09:32.280</span>  <span class="i">INFO</span> <span class="m">212234</span> <span class="g">---</span> <span class="g">[pool-1-thread-1]</span> <span class="c">c.n.I.service.RandomInsertService</span>        <span class="g">:</span> <span class="z">进行数据插入</span><span class="w">---------------------</span></div>
<div class="ln"><span class="g">2021-08-31 22:09:34.280</span>  <span class="i">INFO</span> <span class="m">212234</span> <span class="g">---</span> <span class="g">[pool-1-thread-1]</span> <span class="c">c.n.I.service.RandomInsertService</span>        <span class="g">:</span> <span class="z">进行数据插入</span><span class="w">---------------------</span></div>
<div class="ln"><span class="g">2021-08-31 22:09:36.280</span>  <span class="i">INFO</span> <span class="m">212234</span> <span class="g">---</span> <span class="g">[pool-1-thread-1]</span> <span class="c">c.n.I.service.RandomInsertService</span>        <span class="g">:</span> <span class="z">进行数据插入</span><span class="w">---------------------</span></div>
<div class="ln"><span class="g">2021-08-31 22:09:38.280</span>  <span class="i">INFO</span> <span class="m">212234</span> <span class="g">---</span> <span class="g">[pool-1-thread-1]</span> <span class="c">c.n.I.service.RandomInsertService</span>        <span class="g">:</span> <span class="z">进行数据插入</span><span class="w">---------------------</span></div>
<div class="ln"><span class="g">2021-08-31 22:09:40.280</span>  <span class="i">INFO</span> <span class="m">212234</span> <span class="g">---</span> <span class="g">[pool-1-thread-1]</span> <span class="c">c.n.I.service.RandomInsertService</span>        <span class="g">:</span> <span class="z">进行数据插入</span><span class="w">---------------------</span></div>
<div class="ln"><span class="g">2021-08-31 22:09:42.280</span>  <span class="i">INFO</span> <span class="m">212234</span> <span class="g">---</span> <span class="g">[pool-1-thread-1]</span> <span class="c">c.n.I.service.RandomInsertService</span>        <span class="g">:</span> <span class="z">进行数据插入</span><span class="w">---------------------</span></div>
<div class="ln"><span class="g">2021-08-31 22:09:44.280</span>  <span class="i">INFO</span> <span class="m">212234</span> <span class="g">---</span> <span class="g">[pool-1-thread-1]</span> <span class="c">c.n.I.service.RandomInsertService</span>        <span class="g">:</span> <span class="z">进行数据插入</span><span class="w">---------------------</span></div>
<div class="ln"><span class="g">2021-08-31 22:09:46.280</span>  <span class="i">INFO</span> <span class="m">212234</span> <span class="g">---</span> <span class="g">[pool-1-thread-1]</span> <span class="c">c.n.I.service.RandomInsertService</span>        <span class="g">:</span> <span class="z">进行数据插入</span><span class="w">---------------------</span></div>
<div class="ln"><span class="g">2021-08-31 22:09:48.280</span>  <span class="i">INFO</span> <span class="m">212234</span> <span class="g">---</span> <span class="g">[pool-1-thread-1]</span> <span class="c">c.n.I.service.RandomInsertService</span>        <span class="g">:</span> <span class="z">进行数据插入</span><span class="w">---------------------</span></div>
<div class="ln"><span class="g">2021-08-31 22:09:50.280</span>  <span class="i">INFO</span> <span class="m">212234</span> <span class="g">---</span> <span class="g">[pool-1-thread-1]</span> <span class="c">c.n.I.service.RandomInsertService</span>        <span class="g">:</span> <span class="z">进行数据插入</span><span class="w">---------------------</span></div>
<div class="ln"><span class="g">2021-08-31 22:09:52.280</span>  <span class="i">INFO</span> <span class="m">212234</span> <span class="g">---</span> <span class="g">[pool-1-thread-1]</span> <span class="c">c.n.I.service.RandomInsertService</span>        <span class="g">:</span> <span class="z">进行数据插入</span><span class="w">---------------------</span></div>
<div class="ln"><span class="g">2021-08-31 22:09:54.280</span>  <span class="i">INFO</span> <span class="m">212234</span> <span class="g">---</span> <span class="g">[pool-1-thread-1]</span> <span class="c">c.n.I.service.RandomInsertService</span>        <span class="g">:</span> <span class="z">进行数据插入</span><span class="w">---------------------</span></div>
<div class="ln"><span class="g">2021-08-31 22:09:56.280</span>  <span class="i">INFO</span> <span class="m">212234</span> <span class="g">---</span> <span class="g">[pool-1-thread-1]</span> <span class="c">c.n.I.service.RandomInsertService</span>        <span class="g">:</span> <span class="z">进行数据插入</span><span class="w">---------------------</span></div>
<div class="ln"><span class="g">2021-08-31 22:09:58.280</span>  <span class="i">INFO</span> <span class="m">212234</span> <span class="g">---</span> <span class="g">[pool-1-thread-1]</span> <span class="c">c.n.I.service.RandomInsertService</span>        <span class="g">:</span> <span class="z">进行数据插入</span><span class="w">---------------------</span></div>
<div class="ln"><span class="g">2021-08-31 22:10:00.280</span>  <span class="i">INFO</span> <span class="m">212234</span> <span class="g">---</span> <span class="g">[pool-1-thread-1]</span> <span class="c">c.n.I.service.RandomInsertService</span>        <span class="g">:</span> <span class="z">进行数据插入</span><span class="w">---------------------</span></div>
<div class="ln"><span class="g">2021-08-31 22:10:02.280</span>  <span class="i">INFO</span> <span class="m">212234</span> <span class="g">---</span> <span class="g">[pool-1-thread-1]</span> <span class="c">c.n.I.service.RandomInsertService</span>        <span class="g">:</span> <span class="z">进行数据插入</span><span class="w">---------------------</span></div>
<div class="ln"><span class="g">2021-08-31 22:10:04.280</span>  <span class="i">INFO</span> <span class="m">212234</span> <span class="g">---</span> <span class="g">[pool-1-thread-1]</span> <span class="c">c.n.I.service.RandomInsertService</span>        <span class="g">:</span> <span class="z">进行数据插入</span><span class="w">---------------------</span></div>
<div class="ln"><span class="g">2021-08-31 22:10:06.280</span>  <span class="i">INFO</span> <span class="m">212234</span> <span class="g">---</span> <span class="g">[pool-1-thread-1]</span> <span class="c">c.n.I.service.RandomInsertService</span>        <span class="g">:</span> <span class="z">进行数据插入</span><span class="w">---------------------</span></div>
<div class="ln"><span class="g">2021-08-31 22:10:08.280</span>  <span class="i">INFO</span> <span class="m">212234</span> <span class="g">---</span> <span class="g">[pool-1-thread-1]</span> <span class="c">c.n.I.service.RandomInsertService</span>        <span class="g">:</span> <span class="z">进行数据插入</span><span class="w">---------------------</span></div>
<div class="ln"><span class="g">2021-08-31 22:10:10.280</span>  <span class="i">INFO</span> <span class="m">212234</span> <span class="g">---</span> <span class="g">[pool-1-thread-1]</span> <span class="c">c.n.I.service.RandomInsertService</span>        <span class="g">:</span> <span class="z">进行数据插入</span><span class="w">---------------------</span></div>
<div class="ln"><span class="g">2021-08-31 22:10:12.280</span>  <span class="i">INFO</span> <span class="m">212234</span> <span class="g">---</span> <span class="g">[pool-1-thread-1]</span> <span class="c">c.n.I.service.RandomInsertService</span>        <span class="g">:</span> <span class="z">进行数据插入</span><span class="w">---------------------</span></div>
<div class="ln"><span class="g">2021-08-31 22:10:14.280</span>  <span class="i">INFO</span> <span class="m">212234</span> <span class="g">---</span> <span class="g">[pool-1-thread-1]</span> <span class="c">c.n.I.service.RandomInsertService</span>        <span class="g">:</span> <span class="z">进行数据插入</span><span class="w">---------------------</span></div>
<div class="ln"><span class="g">2021-08-31 22:10:16.280</span>  <span class="i">INFO</span> <span class="m">212234</span> <span class="g">---</span> <span class="g">[pool-1-thread-1]</span> <span class="c">c.n.I.service.RandomInsertService</span>        <span class="g">:</span> <span class="z">进行数据插入</span><span class="w">---------------------</span></div>
<div class="ln"><span class="g">2021-08-31 22:10:18.280</span>  <span class="i">INFO</span> <span class="m">212234</span> <span class="g">---</span> <span class="g">[pool-1-thread-1]</span> <span class="c">c.n.I.service.RandomInsertService</span>        <span class="g">:</span> <span class="z">进行数据插入</span><span class="w">---------------------</span></div>
<div class="ln"><span class="g">2021-08-31 22:10:20.280</span>  <span class="i">INFO</span> <span class="m">212234</span> <span class="g">---</span> <span class="g">[pool-1-thread-1]</span> <span class="c">c.n.I.service.RandomInsertService</span>        <span class="g">:</span> <span class="z">进行数据插入</span><span class="w">---------------------</span></div>
<div class="ln"><span class="g">2021-08-31 22:10:22.280</span>  <span class="i">INFO</span> <span class="m">212234</span> <span class="g">---</span> <span class="g">[pool-1-thread-1]</span> <span class="c">c.n.I.service.RandomInsertService</span>        <span class="g">:</span> <span class="z">进行数据插入</span><span class="w">---------------------</span></div>
<div class="ln"><span class="g">2021-08-31 22:10:24.280</span>  <span class="i">INFO</span> <span class="m">212234</span> <span class="g">---</span> <span class="g">[pool-1-thread-1]</span> <span class="c">c.n.I.service.RandomInsertService</span>        <span class="g">:</span> <span class="z">进行数据插入</span><span class="w">---------------------</span></div>
<div class="ln"><span class="g">2021-08-31 22:10:26.280</span>  <span class="i">INFO</span> <span class="m">212234</span> <span class="g">---</span> <span class="g">[pool-1-thread-1]</span> <span class="c">c.n.I.service.RandomInsertService</span>        <span class="g">:</span> <span class="z">进行数据插入</span><span class="w">---------------------</span></div>
<div class="ln"><span class="g">2021-08-31 22:10:28.280</span>  <span class="i">INFO</span> <span class="m">212234</span> <span class="g">---</span> <span class="g">[pool-1-thread-1]</span> <span class="c">c.n.I.service.RandomInsertService</span>        <span class="g">:</span> <span class="z">进行数据插入</span><span class="w">---------------------</span></div>
<div class="ln"><span class="g">2021-08-31 22:10:30.280</span>  <span class="i">INFO</span> <span class="m">212234</span> <span class="g">---</span> <span class="g">[pool-1-thread-1]</span> <span class="c">c.n.I.service.RandomInsertService</span>        <span class="g">:</span> <span class="z">进行数据插入</span><span class="w">---------------------</span></div>
<div class="ln"><span class="g">2021-08-31 22:10:32.280</span>  <span class="i">INFO</span> <span class="m">212234</span> <span class="g">---</span> <span class="g">[pool-1-thread-1]</span> <span class="c">c.n.I.service.RandomInsertService</span>        <span class="g">:</span> <span class="z">进行数据插入</span><span class="w">---------------------</span></div>
<div class="ln"><span class="g">2021-08-31 22:10:34.280</span>  <span class="i">INFO</span> <span class="m">212234</span> <span class="g">---</span> <span class="g">[pool-1-thread-1]</span> <span class="c">c.n.I.service.RandomInsertService</span>        <span class="g">:</span> <span class="z">进行数据插入</span><span class="w">---------------------</span></div>
<div id="cursor"></div>
<svg id="sticker" class="abs" style="left:1471px;top:112px;width:130px;height:115px" viewBox="1715 235 130 115">
<defs><filter id="sb" x="-5%" y="-5%" width="110%" height="110%"><feGaussianBlur stdDeviation=".35"/></filter></defs><g filter="url(#sb)">
<rect x="1724" y="294" width="9" height="27" rx="3.500" fill="#fbd0e2"/>
<path d="M1730 297 L1752 310 L1757 330 L1737 326 L1727 319 Z" fill="#fbc9dc"/>
<path d="M1736 322 C1740 318 1750 317 1760 318 L1815 318 C1822 318 1826 322 1822 328 C1816 337 1800 341.500 1778 341.500 C1756 341.500 1740 337 1737 330 C1735 327 1735 324 1736 322 Z" fill="#fbc9dc"/>
<ellipse cx="1827" cy="319.500" rx="7" ry="12.800" fill="#f9bcd5" transform="rotate(14 1827 319.500)"/>
<ellipse cx="1739" cy="305.500" rx="10.500" ry="13.500" fill="#bfe2fb" transform="rotate(-18 1739 305.500)"/>
<path d="M1789 304 C1792 296 1802 293 1810 296 C1820 294 1826 303 1824 312 C1822 322 1812 326 1802 325 C1794 325 1788 320 1788 313 Z" fill="#fdeaa6"/>
<path d="M1808.7 307.53 C1803.50 304.28 1805.78 300.70 1808.7 303.46 C1811.62 300.70 1813.90 304.28 1808.7 307.53Z" fill="#f58aa0"/>
<path d="M1760 305 C1768 300 1784 302 1787 312 C1790 321 1786 328 1778 329 C1772 331 1764 330 1760 327 C1755 329 1750 326 1751 322 C1751 319 1754 318 1757 318 Z" fill="#fff" stroke="#8d4a2f" stroke-width=".9"/>
<circle cx="1772.800" cy="286.700" r="30" fill="#fff" stroke="#8d4a2f" stroke-width=".9"/>
<ellipse cx="1753" cy="294" rx="3.500" ry="2.200" fill="#ffc9d3"/><ellipse cx="1778.500" cy="297.500" rx="4.500" ry="2.500" fill="#ffc9d3"/>
<circle cx="1758.700" cy="292.300" r="2" fill="#4a2a20"/><circle cx="1773" cy="293.400" r="2" fill="#4a2a20"/><path d="M1762 292.500c.3 2.500 3.200 2.600 3.800.4 .4 2.400 3.300 2.600 3.900.3" stroke="#4a2a20" stroke-width=".9" fill="none"/>
<rect x="1752" y="297.500" width="11.500" height="19.500" rx="2.300" fill="#f9b9cd" stroke="#c96a86" stroke-width=".7" transform="rotate(-8 1757.500 307)"/>
<path d="M1763 307.500 C1768 306 1774 305.500 1777 307 C1776 311 1770 313.500 1764 313.500Z" fill="#fff" stroke="#8d4a2f" stroke-width=".8"/><ellipse cx="1749.300" cy="309" rx="2.600" ry="3.200" fill="#fff" stroke="#8d4a2f" stroke-width=".8"/>
<path d="M1778.500 259 C1779.500 255 1781 252 1783.500 250" stroke="#8d4a2f" stroke-width=".9" fill="none"/>
<ellipse cx="1780" cy="246" rx="3.800" ry="6" fill="#93d070" stroke="#5a8f3c" stroke-width=".5" transform="rotate(-25 1780 246)"/><ellipse cx="1789" cy="252.300" rx="6" ry="3.600" fill="#93d070" stroke="#5a8f3c" stroke-width=".5" transform="rotate(18 1789 252.300)"/>
<g fill="#fff5f7"><circle cx="1757.55" cy="247.80" r="2.52"/><circle cx="1756.30" cy="251.65" r="2.52"/><circle cx="1753.02" cy="254.03" r="2.52"/><circle cx="1748.98" cy="254.03" r="2.52"/><circle cx="1745.70" cy="251.65" r="2.52"/><circle cx="1744.45" cy="247.80" r="2.52"/><circle cx="1745.70" cy="243.95" r="2.52"/><circle cx="1748.98" cy="241.57" r="2.52"/><circle cx="1753.02" cy="241.57" r="2.52"/><circle cx="1756.30" cy="243.95" r="2.52"/><circle cx="1751" cy="247.8" r="6.72"/></g><circle cx="1751" cy="247.800" r="4" fill="#ff7fa0"/>
<g fill="#fff5f7"><circle cx="1739.55" cy="264.00" r="2.52"/><circle cx="1738.30" cy="267.85" r="2.52"/><circle cx="1735.02" cy="270.23" r="2.52"/><circle cx="1730.98" cy="270.23" r="2.52"/><circle cx="1727.70" cy="267.85" r="2.52"/><circle cx="1726.45" cy="264.00" r="2.52"/><circle cx="1727.70" cy="260.15" r="2.52"/><circle cx="1730.98" cy="257.77" r="2.52"/><circle cx="1735.02" cy="257.77" r="2.52"/><circle cx="1738.30" cy="260.15" r="2.52"/><circle cx="1733" cy="264" r="6.72"/></g><text x="1733" y="267.800" text-anchor="middle" font-family="Liberation Serif,serif" font-weight="bold" font-size="10.500" fill="#f0507c">E</text>
<path d="M1803.3 268.48 C1794.10 262.73 1798.12 256.40 1803.3 261.29 C1808.47 256.40 1812.50 262.73 1803.3 268.48Z" fill="#ff8fa3"/><path d="M1731.2 287.05 C1724.00 282.55 1727.15 277.60 1731.2 281.43 C1735.25 277.60 1738.40 282.55 1731.2 287.05Z" fill="#ff8fa3"/><path d="M1812.3 291.55 C1805.10 287.05 1808.25 282.10 1812.3 285.93 C1816.35 282.10 1819.50 287.05 1812.3 291.55Z" fill="#ff8fa3"/><path d="M1732.6 329.33 C1724.20 324.08 1727.88 318.30 1732.6 322.76 C1737.32 318.30 1741.00 324.08 1732.6 329.33Z" fill="#ff8f98"/>
<path d="M1789.500 326 L1786.500 328.500 L1788.500 331 L1790 330 L1790 336 L1797 336 L1797 330 L1798.500 331 L1800.500 328.500 L1797.500 326 C1796 327.500 1791 327.500 1789.500 326Z" fill="#9d4b6c"/>
</g></svg>
<div id="wm">CSDN @秦枫-_-</div>
</div>
</body></html>
